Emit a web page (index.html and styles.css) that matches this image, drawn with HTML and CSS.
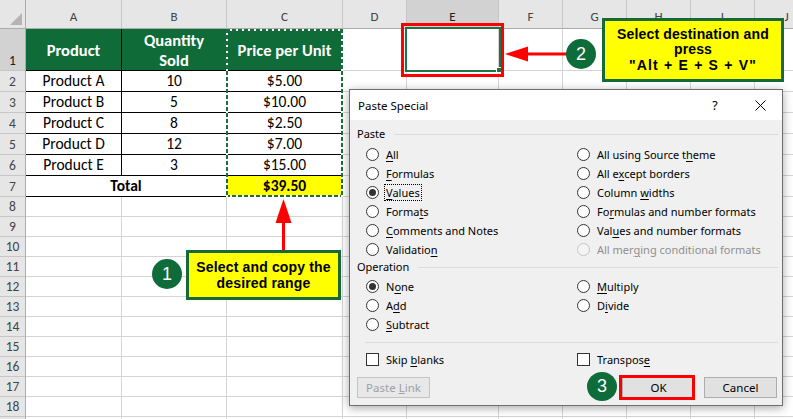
FILE: index.html
```html
<!DOCTYPE html>
<html>
<head>
<meta charset="utf-8">
<title>Paste Special</title>
<link rel="stylesheet" href="styles.css">
</head>
<body>
<div class="sheet">
  <div class="grid">
    <div class="corner"></div><div class="ch">A</div><div class="ch">B</div><div class="ch">C</div><div class="ch">D</div><div class="ch sel">E</div><div class="ch">F</div><div class="ch">G</div><div class="ch">H</div><div class="ch">I</div><div class="ch">J</div>
    <div class="rh sel">1</div><div class="t th">Product</div><div class="t th"><span>Quantity<br>Sold</span></div><div class="t th">Price per Unit</div><div></div><div></div><div></div><div></div><div></div><div></div><div></div>
    <div class="rh">2</div><div class="t">Product A</div><div class="t">10</div><div class="t">$5.00</div><div></div><div></div><div></div><div></div><div></div><div></div><div></div>
    <div class="rh">3</div><div class="t">Product B</div><div class="t">5</div><div class="t">$10.00</div><div></div><div></div><div></div><div></div><div></div><div></div><div></div>
    <div class="rh">4</div><div class="t">Product C</div><div class="t">8</div><div class="t">$2.50</div><div></div><div></div><div></div><div></div><div></div><div></div><div></div>
    <div class="rh">5</div><div class="t">Product D</div><div class="t">12</div><div class="t">$7.00</div><div></div><div></div><div></div><div></div><div></div><div></div><div></div>
    <div class="rh">6</div><div class="t">Product E</div><div class="t">3</div><div class="t">$15.00</div><div></div><div></div><div></div><div></div><div></div><div></div><div></div>
    <div class="rh">7</div><div class="t total">Total</div><div class="t tot">$39.50</div><div></div><div></div><div></div><div></div><div></div><div></div><div></div>
    <div class="rh">8</div><div></div><div></div><div></div><div></div><div></div><div></div><div></div><div></div><div></div><div></div>
    <div class="rh">9</div><div></div><div></div><div></div><div></div><div></div><div></div><div></div><div></div><div></div><div></div>
    <div class="rh">10</div><div></div><div></div><div></div><div></div><div></div><div></div><div></div><div></div><div></div><div></div>
    <div class="rh">11</div><div></div><div></div><div></div><div></div><div></div><div></div><div></div><div></div><div></div><div></div>
    <div class="rh">12</div><div></div><div></div><div></div><div></div><div></div><div></div><div></div><div></div><div></div><div></div>
    <div class="rh">13</div><div></div><div></div><div></div><div></div><div></div><div></div><div></div><div></div><div></div><div></div>
    <div class="rh">14</div><div></div><div></div><div></div><div></div><div></div><div></div><div></div><div></div><div></div><div></div>
    <div class="rh">15</div><div></div><div></div><div></div><div></div><div></div><div></div><div></div><div></div><div></div><div></div>
    <div class="rh">16</div><div></div><div></div><div></div><div></div><div></div><div></div><div></div><div></div><div></div><div></div>
    <div class="rh">17</div><div></div><div></div><div></div><div></div><div></div><div></div><div></div><div></div><div></div><div></div>
    <div class="rh">18</div><div></div><div></div><div></div><div></div><div></div><div></div><div></div><div></div><div></div><div></div>
    <div class="rh">19</div><div></div><div></div><div></div><div></div><div></div><div></div><div></div><div></div><div></div><div></div>
  </div>

  <div class="ants"></div>
  <div class="selection"><span class="handle"></span></div>
  <div class="redbox dest"></div>

  <svg class="arrow a1" width="17" height="53" viewBox="0 0 17 53"><polygon points="8.5,1 0.5,25 16.5,25" fill="#ff0000"/><rect x="7" y="24" width="3" height="29" fill="#ff0000"/></svg>
  <svg class="arrow a2" width="64" height="18" viewBox="0 0 64 18"><polygon points="1,9 24,1.5 24,16.5" fill="#ff0000"/><rect x="23" y="7.5" width="41" height="3" fill="#ff0000"/></svg>

  <div class="callout c1"><p>Select and copy the<br>desired range</p></div>
  <div class="callout c2"><p>Select destination and<br>press<br><span class="keys">"Alt + E + S + V"</span></p></div>
  <div class="badge b1">1</div>
  <div class="badge b2">2</div>

  <div class="dialog">
    <div class="titlebar">
      <span class="title">Paste Special</span>
      <span class="help">?</span>
      <svg class="close" width="11" height="11" viewBox="0 0 11 11"><path d="M0.5 0.5L10.5 10.5M10.5 0.5L0.5 10.5" stroke="#000" stroke-width="1" fill="none"/></svg>
    </div>
    <div class="dbody">
      <div class="group"><span>Paste</span><span class="rule"></span></div>
      <div class="opts paste">
        <div class="opt"><span class="radio"></span><span><u>A</u>ll</span></div>
        <div class="opt"><span class="radio"></span><span>All using Source t<u>h</u>eme</span></div>
        <div class="opt"><span class="radio"></span><span><u>F</u>ormulas</span></div>
        <div class="opt"><span class="radio"></span><span>All e<u>x</u>cept borders</span></div>
        <div class="opt"><span class="radio on"></span><span class="focus"><u>V</u>alues</span></div>
        <div class="opt"><span class="radio"></span><span>Column <u>w</u>idths</span></div>
        <div class="opt"><span class="radio"></span><span>Forma<u>t</u>s</span></div>
        <div class="opt"><span class="radio"></span><span>Fo<u>r</u>mulas and number formats</span></div>
        <div class="opt"><span class="radio"></span><span><u>C</u>omments and Notes</span></div>
        <div class="opt"><span class="radio"></span><span>Val<u>u</u>es and number formats</span></div>
        <div class="opt"><span class="radio"></span><span>Validatio<u>n</u></span></div>
        <div class="opt off"><span class="radio"></span><span>All mer<u>g</u>ing conditional formats</span></div>
      </div>
      <div class="group"><span>Operation</span><span class="rule"></span></div>
      <div class="opts operation">
        <div class="opt"><span class="radio on"></span><span>N<u>o</u>ne</span></div>
        <div class="opt"><span class="radio"></span><span><u>M</u>ultiply</span></div>
        <div class="opt"><span class="radio"></span><span>A<u>d</u>d</span></div>
        <div class="opt"><span class="radio"></span><span>D<u>i</u>vide</span></div>
        <div class="opt"><span class="radio"></span><span><u>S</u>ubtract</span></div>
        <div class="opt"></div>
      </div>
      <div class="sep"></div>
      <div class="opts checks">
        <div class="opt"><span class="check"></span><span>Skip <u>b</u>lanks</span></div>
        <div class="opt"><span class="check"></span><span>Transpos<u>e</u></span></div>
      </div>
      <div class="buttons">
        <button class="btn" disabled>Paste <u>L</u>ink</button>
        <span class="spacer"></span>
        <button class="btn ok">OK</button>
        <button class="btn">Cancel</button>
      </div>
    </div>
  </div>

  <div class="redbox okmark"></div>
  <div class="badge b3">3</div>
</div>
</body>
</html>
```

FILE: styles.css
```css
* { box-sizing: border-box; }
html, body { margin: 0; padding: 0; background: #fff; }
body { width: 793px; height: 419px; overflow: hidden; }

.sheet {
  position: relative;
  width: 793px;
  height: 419px;
  overflow: hidden;
  font-family: Carlito, Lato, "Liberation Sans", sans-serif;
  color: #000;
}

/* ---------- spreadsheet grid ---------- */
.grid {
  display: grid;
  grid-template-columns: 26px 96px 105px 116px 64px 92px 64px 64px 64px 64px 64px;
  grid-template-rows: 29px 42px repeat(6, 21px) repeat(12, 20px);
  width: max-content;
}
.grid > div {
  border-right: 1px solid #d4d4d4;
  border-bottom: 1px solid #d4d4d4;
  display: flex;
  justify-content: center;
  align-items: flex-end;
  min-width: 0;
  overflow: hidden;
  white-space: nowrap;
  font-size: 15.5px;
  line-height: 18px;
  padding-bottom: 1px;
}
.grid > .corner {
  position: relative;
  background: #e6e6e6;
  border-right-color: #ababab;
  border-bottom-color: #ababab;
}
.grid > .corner::after {
  content: "";
  position: absolute;
  right: 3px;
  bottom: 3px;
  width: 12px;
  height: 12px;
  background: #b4b4b4;
  clip-path: polygon(100% 0, 100% 100%, 0 100%);
}
.grid > .ch {
  background: #e6e6e6;
  color: #444;
  font-size: 13px;
  line-height: 14px;
  padding-bottom: 4px;
  border-right-color: #c6c6c6;
  border-bottom-color: #ababab;
}
.grid > .rh {
  background: #e6e6e6;
  color: #444;
  font-size: 13.5px;
  line-height: 15px;
  padding-bottom: 2px;
  border-right-color: #ababab;
  border-bottom-color: #c6c6c6;
}
.grid > .sel { background: #d2d2d2; color: #222; }

.grid > .t { border-right-color: #000; border-bottom-color: #000; }
.grid > .th {
  background: #0f6b38;
  color: #fff;
  font-weight: bold;
  font-size: 16.5px;
  align-items: center;
  text-align: center;
  line-height: 20px;
  padding-bottom: 0;
}
.grid > .total { grid-column: span 2; font-weight: bold; }
.grid > .tot { background: #ffff00; font-weight: bold; }

/* ---------- annotations over the sheet ---------- */
.ants {
  position: absolute;
  left: 226px;
  top: 29px;
  width: 117px;
  height: 168px;
  background:
    repeating-linear-gradient(180deg, #1d6b3f 0 4px, #fff 4px 6px) 0 0 / 2px 100% no-repeat,
    repeating-linear-gradient(180deg, #1d6b3f 0 4px, #fff 4px 6px) 100% 0 / 2px 100% no-repeat,
    repeating-linear-gradient(90deg, #1d6b3f 0 4px, #fff 4px 6px) 0 0 / 100% 2px no-repeat,
    repeating-linear-gradient(90deg, #1d6b3f 0 4px, #fff 4px 6px) 0 100% / 100% 2px no-repeat;
}
.selection {
  position: absolute;
  left: 405px;
  top: 27px;
  width: 96px;
  height: 45px;
  border: 2px solid #217346;
}
.handle {
  position: absolute;
  right: -3px;
  bottom: -3px;
  width: 6px;
  height: 6px;
  background: #217346;
  border: 1px solid #fff;
}
.redbox {
  position: absolute;
  border: 3px solid #ff0000;
}
.redbox.dest { left: 401px; top: 23px; width: 103px; height: 54px; }
.redbox.okmark { left: 619px; top: 375px; width: 76px; height: 25px; }

.arrow { position: absolute; display: block; }
.arrow.a1 { left: 275px; top: 198px; }
.arrow.a2 { left: 504px; top: 45px; }

.callout {
  position: absolute;
  display: flex;
  align-items: center;
  justify-content: center;
  background: #ffff00;
  border: 3px solid #17693a;
  font-family: "Liberation Sans", Arial, sans-serif;
  font-weight: bold;
  font-size: 14px;
  color: #000;
  text-align: center;
}
.callout p { margin: 0; letter-spacing: 0.15px; }
.callout.c1 { left: 186px; top: 250px; width: 155px; height: 50px; line-height: 16.5px; }
.callout.c2 { left: 602px; top: 18px; width: 182px; height: 64px; line-height: 15.5px; }
.callout .keys { letter-spacing: 1.2px; }

.badge {
  position: absolute;
  width: 30px;
  height: 30px;
  border-radius: 50%;
  background: #0e6b3a;
  color: #fff;
  font-family: "Liberation Sans", Arial, sans-serif;
  font-size: 18px;
  line-height: 30px;
  text-align: center;
}
.badge.b1 { left: 152px; top: 259px; }
.badge.b2 { left: 566px; top: 39px; }
.badge.b3 { left: 587px; top: 372px; width: 30px; height: 29px; line-height: 29px; }

/* ---------- Paste Special dialog ---------- */
.dialog {
  position: absolute;
  left: 349px;
  top: 89px;
  width: 434px;
  height: 317px;
  border: 1px solid #6f6f6f;
  background: #f0f0f0;
  box-shadow: 0 2px 9px rgba(0, 0, 0, 0.35);
  font-family: "Noto Sans", "Open Sans", sans-serif;
  font-size: 11px;
  color: #000;
  display: flex;
  flex-direction: column;
}
.titlebar {
  height: 30px;
  background: #fff;
  display: flex;
  align-items: center;
  padding: 0 16px 0 8px;
}
.title { flex: 1; font-size: 11.5px; }
.help { width: 20px; text-align: center; font-size: 12.5px; margin-right: 30px; }
.close { display: block; }

.dbody {
  flex: 1;
  display: flex;
  flex-direction: column;
  padding: 6px 4px 7px 0;
}
.group {
  display: flex;
  align-items: center;
  height: 16px;
  padding-left: 7px;
  line-height: 16px;
}
.group .rule { flex: 1; height: 1px; background: #dcdcdc; margin-left: 9px; }

.opts {
  display: grid;
  grid-template-columns: 211px 1fr;
  grid-auto-rows: 19px;
  padding-left: 16px;
}
.opts.paste { margin-top: 3px; }
.opts.operation { margin-top: 2px; }
.opts.checks { margin-top: 7px; }

.opt {
  display: flex;
  align-items: center;
  gap: 7px;
  white-space: nowrap;
  line-height: 15px;
}
.opt u { text-underline-offset: 2px; }
.radio {
  width: 13px;
  height: 13px;
  flex: none;
  border: 1px solid #333;
  border-radius: 50%;
  background: #fff;
  position: relative;
}
.radio.on::after {
  content: "";
  position: absolute;
  left: 2px;
  top: 2px;
  width: 7px;
  height: 7px;
  border-radius: 50%;
  background: #333;
}
.opt.off { color: #8f8f8f; }
.opt.off .radio { border-color: #c4c4c4; background: #f4f4f4; }
.focus { border: 1px dotted #000; padding: 0 1px; margin-left: -2px; }
.check {
  width: 13px;
  height: 13px;
  flex: none;
  border: 1px solid #333;
  background: #fff;
}
.sep { height: 1px; background: #dcdcdc; margin: 8px 0 0 15px; }

.buttons {
  display: flex;
  margin-top: 8px;
  padding-left: 7px;
  padding-right: 1px;
}
.spacer { flex: 1; }
.btn {
  width: 73px;
  height: 21px;
  padding: 0;
  background: #e1e1e1;
  border: 1px solid #adadad;
  font-family: "Noto Sans", "Open Sans", sans-serif;
  font-size: 11.5px;
  color: #000;
  line-height: 17px;
}
.btn:disabled { color: #a0a0a0; border-color: #c4c4c4; background: #e8e8e8; }
.btn.ok { margin-right: 9px; }
```
